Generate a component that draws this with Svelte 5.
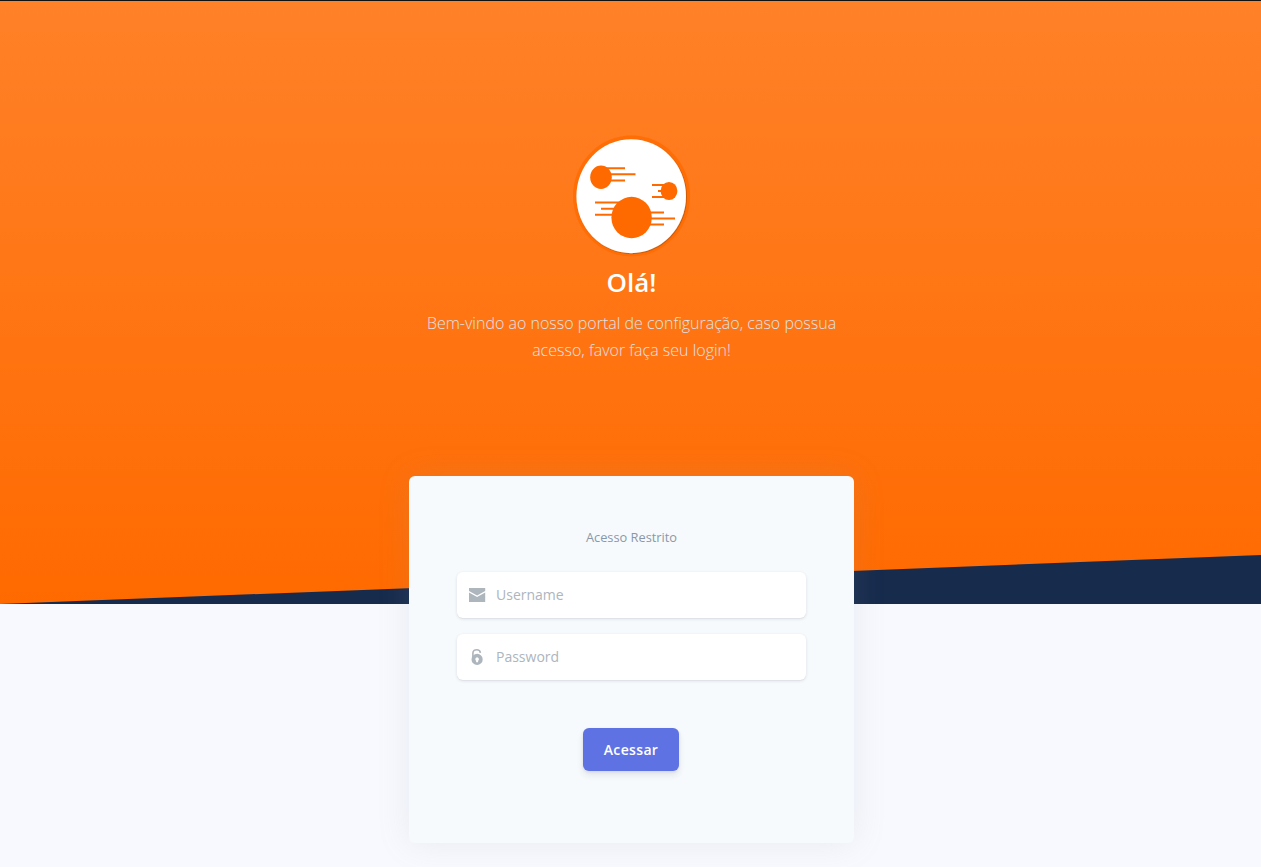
<script>
  let username = $state('');
  let password = $state('');
</script>

<main class="page">
  <header class="hero">
    <svg class="logo" width="120" height="122" viewBox="0 0 120 122" aria-hidden="true">
      <defs>
        <filter id="soft" x="-10%" y="-10%" width="125%" height="125%">
          <feDropShadow dx="0.6" dy="0.6" stdDeviation="0.6" flood-color="#5c2600" flood-opacity=".5" />
        </filter>
      </defs>
      <ellipse cx="60.5" cy="61" rx="58.5" ry="60.5" fill="#ff6d05" />
      <ellipse cx="60.2" cy="61.2" rx="54.8" ry="57" fill="#fff" filter="url(#soft)" />
      <g transform="translate(-1 0)">
        <path stroke="#ff6a00" stroke-width="2" d="M34 33.2H55M34 39.2H65.5M34 45.4H55M82 49.9H98M88 56H98M82 62H98M25 67.6H51M31 73.7H51M25 79.8H51M78 77.4H94M78 83.5H105M78 89.5H94" />
        <g fill="#ff6a00">
          <ellipse cx="31" cy="42.3" rx="10.8" ry="11.7" />
          <ellipse cx="99" cy="56" rx="8.4" ry="9.1" />
          <ellipse cx="61.6" cy="82.5" rx="20.2" ry="20.7" />
        </g>
      </g>
    </svg>
    <h1>Olá!</h1>
    <p>Bem-vindo ao nosso portal de configuração, caso possua acesso, favor faça seu login!</p>
    <svg class="slope" viewBox="0 0 2560 100" preserveAspectRatio="none" aria-hidden="true">
      <polygon points="2560 0 2560 100 0 100" fill="#172b4d" />
    </svg>
  </header>

  <form class="card" onsubmit={(e) => e.preventDefault()}>
    <small>Acesso Restrito</small>
    <label class="field">
      <svg width="18" height="18" viewBox="0 0 18 18" aria-hidden="true">
        <path fill="#adb5bd" d="M1 2H17.2V5L9.1 9.6L1 5ZM1 6.4L9.1 11L17.2 6.4V16H1Z" />
      </svg>
      <input type="text" placeholder="Username" bind:value={username} />
    </label>
    <label class="field">
      <svg width="18" height="18" viewBox="0 0 18 18" aria-hidden="true">
        <path fill="none" stroke="#adb5bd" stroke-width="1.6" d="M4.9 10V5Q5.1 1.8 8.8 1.8Q12 1.8 12.4 4.8" />
        <path fill="#adb5bd" fill-rule="evenodd" d="M9.1 5.8a5.6 5.6 0 1 0 0 11.2a5.6 5.6 0 0 0 0-11.2ZM9.1 9.2a2 2 0 0 1 1 3.6V14.2H8.1V12.8A2 2 0 0 1 9.1 9.2Z" />
      </svg>
      <input type="password" placeholder="Password" bind:value={password} />
    </label>
    <button type="submit">Acessar</button>
  </form>
</main>

<style>
  :global(body) {
    background: #f8f9fe;
  }
  .page {
    box-sizing: border-box;
    height: 867px;
    overflow: hidden;
    border-top: 1px solid #111;
    background: #f8f9fe;
    font-family: 'Open Sans', sans-serif;
    display: flex;
    flex-direction: column;
    align-items: center;
  }
  .hero {
    box-sizing: border-box;
    position: relative;
    flex: none;
    width: 100%;
    height: 603px;
    padding-top: 134px;
    display: flex;
    flex-direction: column;
    align-items: center;
    background: linear-gradient(#ff8128, #ff6a00);
    text-align: center;
  }
  .logo {
    display: block;
  }
  h1 {
    margin: 6px 0 8px;
    padding-left: 2px;
    color: #fff;
    font-size: 26px;
    line-height: 39px;
    font-weight: 600;
  }
  p {
    width: 430px;
    margin: 0;
    padding-left: 2px;
    color: #dee2e6;
    font-size: 16px;
    line-height: 27.2px;
    font-weight: 300;
  }
  .slope {
    position: absolute;
    left: 0;
    bottom: 0;
    width: 100%;
    height: 49px;
  }
  .card {
    box-sizing: border-box;
    position: relative;
    flex: none;
    width: 445px;
    height: 367px;
    margin: -128px 0 0 2px;
    padding: 48px;
    display: flex;
    flex-direction: column;
    align-items: center;
    border-radius: 6px;
    background: #f7fafc;
    box-shadow: 0 0 32px rgba(136, 152, 170, 0.15);
  }
  small {
    margin-bottom: 21px;
    color: #8898aa;
    font-size: 12.8px;
    line-height: 27px;
  }
  .field {
    box-sizing: border-box;
    width: 100%;
    height: 46px;
    margin-bottom: 16px;
    padding-left: 11px;
    display: flex;
    align-items: center;
    gap: 10px;
    border-radius: 6px;
    background: #fff;
    box-shadow: 0 1px 3px rgba(50, 50, 93, 0.15), 0 1px 0 rgba(0, 0, 0, 0.02);
  }
  input {
    flex: 1;
    min-width: 0;
    padding: 0 0 2px;
    border: 0;
    outline: 0;
    background: transparent;
    font: 14px/21px 'Open Sans', sans-serif;
    color: #8898aa;
  }
  input::placeholder {
    color: #adb5bd;
    opacity: 1;
  }
  button {
    width: 96px;
    height: 43px;
    margin: 32px 1px 0 0;
    padding: 0;
    border: 0;
    border-radius: 6px;
    background: #5e72e4;
    color: #fff;
    font: 600 14px/21px 'Open Sans', sans-serif;
    letter-spacing: 0.35px;
    box-shadow: 0 4px 6px rgba(50, 50, 93, 0.11), 0 1px 3px rgba(0, 0, 0, 0.08);
  }
</style>
